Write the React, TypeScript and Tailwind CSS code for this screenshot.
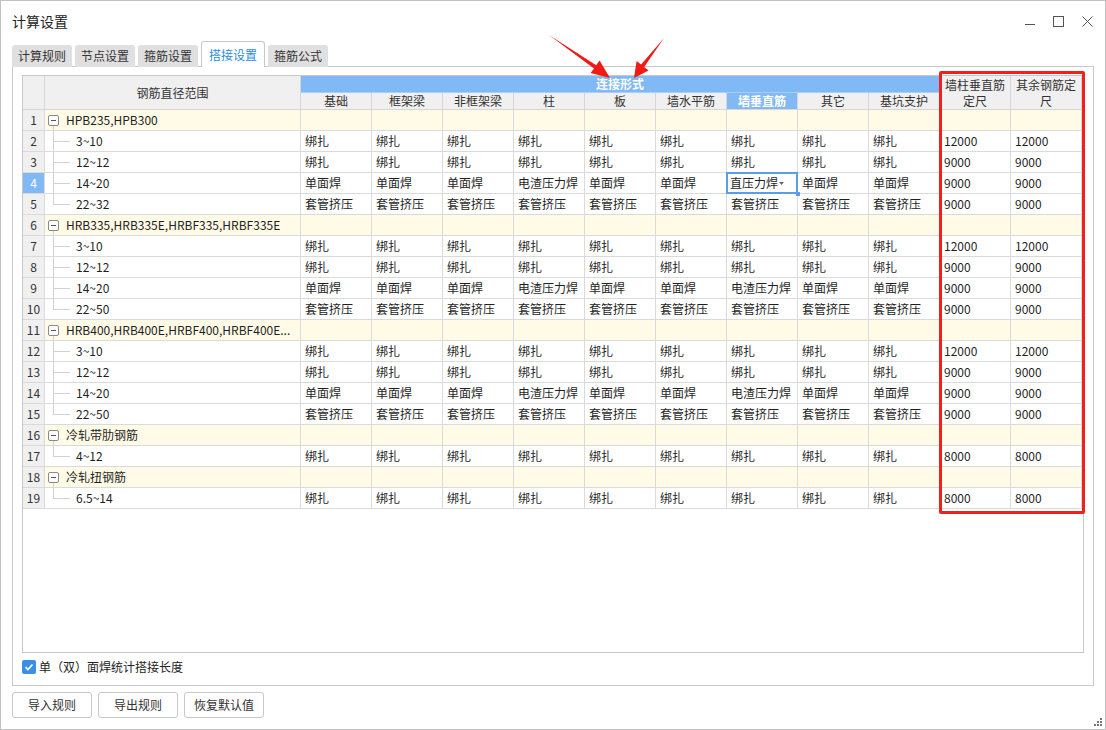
import React from 'react';

const cols = ['基础', '框架梁', '非框架梁', '柱', '板', '墙水平筋', '墙垂直筋', '其它', '基坑支护'];

type Row =
  | { kind: 'group'; label: string }
  | { kind: 'item'; label: string; vals: string[]; last: boolean };

const bind = (a: string) => [...Array(9).fill('绑扎'), a, a];
const weld = ['单面焊', '单面焊', '单面焊', '电渣压力焊', '单面焊', '单面焊', '电渣压力焊', '单面焊', '单面焊', '9000', '9000'];
const sleeve = [...Array(9).fill('套管挤压'), '9000', '9000'];

const rows: Row[] = [
  { kind: 'group', label: 'HPB235,HPB300' },
  { kind: 'item', label: '3~10', vals: bind('12000'), last: false },
  { kind: 'item', label: '12~12', vals: bind('9000'), last: false },
  { kind: 'item', label: '14~20', vals: weld, last: false },
  { kind: 'item', label: '22~32', vals: sleeve, last: true },
  { kind: 'group', label: 'HRB335,HRB335E,HRBF335,HRBF335E' },
  { kind: 'item', label: '3~10', vals: bind('12000'), last: false },
  { kind: 'item', label: '12~12', vals: bind('9000'), last: false },
  { kind: 'item', label: '14~20', vals: weld, last: false },
  { kind: 'item', label: '22~50', vals: sleeve, last: true },
  { kind: 'group', label: 'HRB400,HRB400E,HRBF400,HRBF400E...' },
  { kind: 'item', label: '3~10', vals: bind('12000'), last: false },
  { kind: 'item', label: '12~12', vals: bind('9000'), last: false },
  { kind: 'item', label: '14~20', vals: weld, last: false },
  { kind: 'item', label: '22~50', vals: sleeve, last: true },
  { kind: 'group', label: '冷轧带肋钢筋' },
  { kind: 'item', label: '4~12', vals: bind('8000'), last: true },
  { kind: 'group', label: '冷轧扭钢筋' },
  { kind: 'item', label: '6.5~14', vals: bind('8000'), last: true },
];

const tabs = ['计算规则', '节点设置', '箍筋设置', '搭接设置', '箍筋公式'];

const cell = 'h-[21px] border-r border-b border-[#dadada] text-[12px] leading-[20px] whitespace-nowrap overflow-hidden';
const head = 'border-r border-b border-[#d6d6d6] bg-[#f0f0f0] text-[12px] text-[#333] flex items-center justify-center';

function Arrows() {
  return (
    <svg className="absolute left-0 top-0 pointer-events-none" width="1106" height="730">
      <polygon points="548,34 595.2,64.2 598.6,59.6 609,77 589.6,72 593,67.4" fill="#f11a14" />
      <polygon points="663,37 640.1,63.5 635.6,60 633,77 647.6,69.4 643.2,66" fill="#f11a14" />
    </svg>
  );
}

export default function App() {
  return (
    <div className="relative w-[1106px] h-[730px] bg-white border border-[#c2c2c2] flex flex-col font-['Microsoft_YaHei','Noto_Sans_CJK_SC',sans-serif] text-[#1f1f1f]">
      {/* title bar */}
      <div className="h-[40px] flex items-center pl-[11px] pr-[12px]">
        <span className="text-[14px] text-[#222]">计算设置</span>
        <div className="ml-auto flex items-center gap-[18px] text-[#555]">
          <svg width="10" height="10" viewBox="0 0 10 10"><path d="M0 8.5h10" stroke="#555" strokeWidth="1" /></svg>
          <svg width="11" height="11" viewBox="0 0 11 11"><rect x="0.5" y="0.5" width="10" height="10" fill="none" stroke="#555" /></svg>
          <svg width="11" height="11" viewBox="0 0 11 11"><path d="M0.5 0.5l10 10M10.5 0.5l-10 10" stroke="#555" /></svg>
        </div>
      </div>

      {/* tabs */}
      <div className="h-[26px] ml-[11px] flex items-end gap-[3px] relative z-10">
        {tabs.map((t, i) =>
          i === 3 ? (
            <div key={t} className="h-[26px] px-[7px] bg-white border border-b-0 border-[#c8c8c8] rounded-t-[3px] text-[12px] text-[#2b8be6] flex items-center">
              {t}
            </div>
          ) : (
            <div key={t} className="h-[22px] px-[6px] bg-[#e0e0e0] rounded-t-[3px] text-[12px] text-[#333] flex items-center">
              {t}
            </div>
          )
        )}
      </div>

      {/* panel */}
      <div className="mx-[11px] -mt-px h-[620px] border border-[#c8c8c8] pt-[8px] px-[9px]">
        <div className="h-[578px] border border-[#c8c8c8] bg-white">
          <div className="grid grid-cols-[22px_256px_repeat(11,71px)]">
            <div className={`${head} row-span-2`} />
            <div className={`${head} row-span-2`}>钢筋直径范围</div>
            <div className="col-span-9 h-[17px] bg-[#80b9f5] border-r border-b border-[#a9cff8] text-white text-[12px] font-bold flex items-center justify-center">连接形式</div>
            <div className={`${head} row-span-2 leading-[16px] text-center`}>墙柱垂直筋<br />定尺</div>
            <div className={`${head} row-span-2 leading-[16px] text-center`}>其余钢筋定<br />尺</div>
            {cols.map((c) =>
              c === '墙垂直筋' ? (
                <div key={c} className="h-[17px] border-r border-b border-[#d6d6d6] bg-[#80b9f5] text-white text-[12px] font-bold flex items-center justify-center">{c}</div>
              ) : (
                <div key={c} className={`${head} h-[17px]`}>{c}</div>
              )
            )}

            {rows.map((r, i) => {
              const n = i + 1;
              const sel = n === 4;
              const numCell = (
                <div key={`n${n}`} className={`${cell} text-center ${sel ? 'bg-[#80b9f5] text-white' : 'bg-[#f0f0f0] text-[#333]'}`}>{n}</div>
              );
              if (r.kind === 'group') {
                return (
                  <React.Fragment key={n}>
                    {numCell}
                    <div className={`${cell} relative bg-[#fffbe6] flex items-center pl-[3px] gap-[7px]`}>
                      <span className="w-[11px] h-[11px] border border-[#8a8a8a] rounded-[2px] bg-white flex items-center justify-center shrink-0">
                        <span className="w-[5px] h-px bg-[#555]" />
                      </span>
                      <span className="absolute left-[8px] top-[16px] bottom-0 w-px bg-[#d2d2d2]" />
                      <span>{r.label}</span>
                    </div>
                    {Array.from({ length: 11 }).map((_, k) => (
                      <div key={k} className={`${cell} bg-[#fffbe6]`} />
                    ))}
                  </React.Fragment>
                );
              }
              return (
                <React.Fragment key={n}>
                  {numCell}
                  <div className={`${cell} relative pl-[31px]`}>
                    <span className={`absolute left-[8px] top-0 w-px bg-[#d2d2d2] ${r.last ? 'h-[10px]' : 'bottom-0'}`} />
                    <span className="absolute left-[8px] top-[10px] w-[17px] h-px bg-[#d2d2d2]" />
                    {r.label}
                  </div>
                  {r.vals.map((v, k) =>
                    sel && k === 6 ? (
                      <div key={k} className={`${cell} relative overflow-visible`}>
                        <div className="absolute inset-[-1px] border-2 border-[#5b9de6] flex items-center pl-[2px] pr-[12px]">
                          <span className="flex-1">直压力焊</span>
                          <svg width="5" height="3" viewBox="0 0 5 3"><path d="M0 0h5L2.5 3z" fill="#666" /></svg>
                        </div>
                        <span className="absolute right-[-3px] bottom-[-3px] w-[4px] h-[4px] bg-[#5b9de6]" />
                      </div>
                    ) : (
                      <div key={k} className={`${cell} pl-[4px]`}>{v}</div>
                    )
                  )}
                </React.Fragment>
              );
            })}
          </div>
        </div>

        <label className="mt-[7px] flex items-center gap-[3px] h-[14px] text-[12px] text-[#222]">
          <span className="w-[14px] h-[14px] rounded-[2px] bg-[#3b8fe6] flex items-center justify-center">
            <svg width="10" height="10" viewBox="0 0 10 10"><path d="M1.5 5.2l2.4 2.3 4.6-5" fill="none" stroke="#fff" strokeWidth="1.8" /></svg>
          </span>
          单（双）面焊统计搭接长度
        </label>
      </div>

      {/* buttons */}
      <div className="mt-[6px] ml-[11px] flex gap-[6px]">
        {['导入规则', '导出规则', '恢复默认值'].map((b) => (
          <button key={b} className="w-[80px] h-[26px] border border-[#c8c8c8] rounded-[3px] bg-white text-[12px] text-[#333]">
            {b}
          </button>
        ))}
      </div>

      {/* resize grip */}
      <div className="absolute right-[3px] bottom-[3px] grid grid-cols-3 gap-[1px]">
        <span className="w-[2px] h-[2px]" />
        <span className="w-[2px] h-[2px]" />
        <span className="w-[2px] h-[2px] bg-[#777]" />
        <span className="w-[2px] h-[2px]" />
        <span className="w-[2px] h-[2px] bg-[#777]" />
        <span className="w-[2px] h-[2px] bg-[#777]" />
        <span className="w-[2px] h-[2px] bg-[#777]" />
        <span className="w-[2px] h-[2px] bg-[#777]" />
        <span className="w-[2px] h-[2px] bg-[#777]" />
      </div>

      {/* red annotation */}
      <div className="absolute left-[938px] top-[70px] w-[146px] h-[443px] border-[3px] border-[#f0201a] rounded-[2px] pointer-events-none" />
      <Arrows />
    </div>
  );
}
